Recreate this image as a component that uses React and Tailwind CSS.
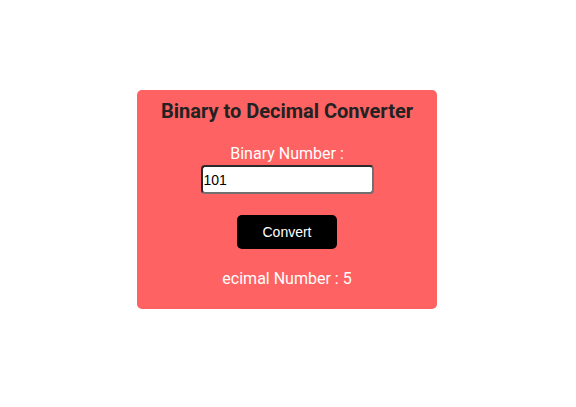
export default function App() {
  return (
    <div className="w-[576px] h-[407px] bg-white flex justify-center pt-[90px] pr-[2px]" style={{ fontFamily: "Roboto, 'Liberation Sans', sans-serif" }}>
      <div className="w-[300px] h-[219px] bg-[#ff6262] rounded-[5px] flex flex-col items-center pt-[9px]">
        <h1 className="text-[20px] leading-[24px] font-bold text-[#222222]">Binary to Decimal Converter</h1>
        <label className="mt-[21px] text-[16px] leading-[20px] text-white">Binary Number :</label>
        <input
          defaultValue="101"
          className="mt-[1px] w-[173px] h-[29px] bg-white rounded-[4px] border-2 border-[#2a2a2a] border-r-[#707070] border-b-[#707070] px-[1px] text-[14px] text-black outline-none"
          style={{ fontFamily: "'Liberation Sans', Arial, sans-serif" }}
        />
        <button
          className="mt-[21px] w-[100px] h-[34px] bg-black rounded-[5px] text-white text-[14px]"
          style={{ fontFamily: "'Liberation Sans', Arial, sans-serif" }}
        >
          Convert
        </button>
        <p className="mt-[20px] text-[16px] leading-[20px] text-white">ecimal Number : 5</p>
      </div>
    </div>
  );
}
